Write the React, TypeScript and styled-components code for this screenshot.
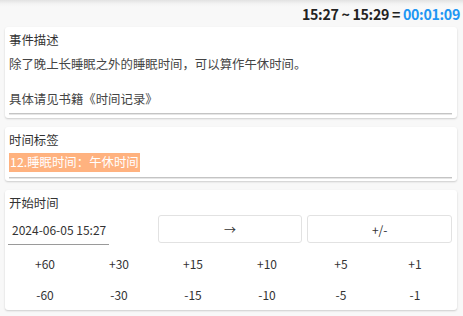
import React from "react";
import styled, { createGlobalStyle } from "styled-components";

const Global = createGlobalStyle`
  html, body { margin: 0; padding: 0; }
  body {
    background: #f8f8f8;
    font-family: "Noto Sans CJK SC", "Noto Sans", sans-serif;
    color: #333;
    width: 463px;
    height: 316px;
    overflow: hidden;
  }
`;

const Page = styled.div`
  position: relative;
  height: 316px;
  padding: 0 6px 0 5px;
  box-sizing: border-box;
  background: linear-gradient(to bottom, #e2e2e2 0px, #f4f4f4 4px, #f8f8f8 7px);
  display: flex;
  flex-direction: column;
  gap: 9px;
`;

const Header = styled.div`
  height: 27px;
  margin-bottom: -9px;
  margin-right: -3px;
  display: flex;
  align-items: center;
  justify-content: flex-end;
  font-size: 14.2px;
  letter-spacing: -0.3px;
  font-weight: 700;
  color: #222;
  line-height: 1;
  padding-top: 1px;
  box-sizing: border-box;
  white-space: pre;
`;

const Blue = styled.span`
  color: #2196f3;
`;

const Card = styled.div<{ $h: number }>`
  background: #fff;
  border-radius: 3px;
  box-shadow: 0 1px 2px rgba(0, 0, 0, 0.18);
  height: ${(p) => p.$h}px;
  padding: 4px 5px 0 4px;
  box-sizing: border-box;
  display: flex;
  flex-direction: column;
`;

const Title = styled.div`
  font-size: 12.4px;
  line-height: 18px;
  height: 18px;
  color: #333;
`;

const Field = styled.div<{ $mt: number }>`
  margin-top: ${(p) => p.$mt}px;
  border-bottom: 1px solid #c4c4c4;
  box-shadow: 0 1px 0 #e6e6e6;
  font-size: 12.4px;
  color: #444;
`;

const Para = styled.div`
  line-height: 17.5px;
  white-space: pre-wrap;
  padding-bottom: 4px;
`;

const Tag = styled.span`
  display: inline-block;
  background: #ffb27f;
  color: #fff;
  font-size: 12.4px;
  line-height: 19px;
  height: 19px;
  padding: 0 1px;
  margin-bottom: 5px;
`;

const ControlRow = styled.div`
  margin-top: 3px;
  margin-left: -1px;
  display: grid;
  grid-template-columns: repeat(3, 1fr);
  gap: 5px;
  height: 30px;
`;

const DateInput = styled.div`
  width: 101px;
  border-bottom: 1px solid #9a9a9a;
  font-size: 12px;
  color: #333;
  padding-left: 4px;
  box-sizing: border-box;
  display: flex;
  align-items: center;
  height: 30px;
`;

const Button = styled.div`
  height: 28px;
  border: 1px solid #e2e2e2;
  border-radius: 3px;
  box-sizing: border-box;
  display: flex;
  align-items: center;
  justify-content: center;
  font-size: 12px;
  color: #333;
  background: #fff;
`;

const Arrow = styled.span`
  font-family: "Noto Sans CJK SC", sans-serif;
  font-size: 12px;
`;

const NumGrid = styled.div`
  margin-top: 3px;
  margin-left: -1px;
  display: grid;
  grid-template-columns: repeat(6, 1fr);
  grid-auto-rows: 31px;
`;

const Num = styled.div`
  display: flex;
  align-items: center;
  justify-content: center;
  font-size: 12px;
  color: #333;
`;

const plus = ["+60", "+30", "+15", "+10", "+5", "+1"];
const minus = ["-60", "-30", "-15", "-10", "-5", "-1"];

export default function App() {
  return (
    <Page>
      <Global />
      <Header>
        {"15:27 ~ 15:29 = "}
        <Blue>00:01:09</Blue>
      </Header>
      <Card $h={91}>
        <Title>事件描述</Title>
        <Field $mt={7}>
          <Para>{"除了晚上长睡眠之外的睡眠时间，可以算作午休时间。\n\n具体请见书籍《时间记录》"}</Para>
        </Field>
      </Card>
      <Card $h={54}>
        <Title>时间标签</Title>
        <Field $mt={4}>
          <Tag>12.睡眠时间：午休时间</Tag>
        </Field>
      </Card>
      <Card $h={120}>
        <Title>开始时间</Title>
        <ControlRow>
          <DateInput>2024-06-05 15:27</DateInput>
          <Button>
            <Arrow>→</Arrow>
          </Button>
          <Button>+/-</Button>
        </ControlRow>
        <NumGrid>
          {plus.map((n) => (
            <Num key={n}>{n}</Num>
          ))}
          {minus.map((n) => (
            <Num key={n}>{n}</Num>
          ))}
        </NumGrid>
      </Card>
    </Page>
  );
}
